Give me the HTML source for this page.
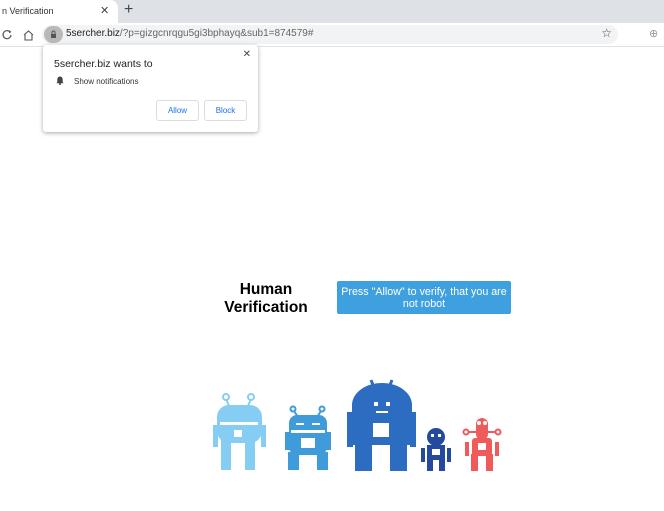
<!DOCTYPE html>
<html><head><meta charset="utf-8"><style>
*{margin:0;padding:0;box-sizing:border-box}
body{width:664px;height:511px;background:#fff;font-family:"Liberation Sans",sans-serif;position:relative;overflow:hidden}
.tabbar{position:absolute;left:0;top:0;width:664px;height:23px;background:#dee1e6}
.tab{position:absolute;left:0;top:0;width:118px;height:23px;background:#fff;border-radius:0 8px 0 0;font-size:9px;color:#333;padding:6px 0 0 2px}
.tab .x{position:absolute;left:100px;top:4px;font-size:11px;color:#444}
.plus{position:absolute;left:124px;top:1px;font-size:16px;color:#444}
.addr{position:absolute;left:0;top:23px;width:664px;height:24px;background:#fff;border-bottom:1px solid #e2e2e2}
.omni{position:absolute;left:42px;top:2px;width:576px;height:19px;background:#f1f3f4;border-radius:10px;font-size:10px;color:#222;padding:3px 0 0 24px}
.omni .lk{position:absolute;left:2px;top:1px;width:19px;height:17px;border-radius:9px;background:#b9b9b9}
.omni span{color:#666}
.pop{position:absolute;left:43px;top:45px;width:215px;height:87px;background:#fff;border-radius:3px;box-shadow:0 1px 4px rgba(0,0,0,.35)}
.btn{position:absolute;top:55px;height:21px;border:1px solid #dadce0;border-radius:3px;font-size:8px;color:#1a73e8;text-align:center;line-height:19px}
h1{position:absolute;left:218px;top:281px;width:96px;text-align:center;font-size:15.5px;line-height:18px;font-weight:bold;color:#000}
.cta{position:absolute;left:337px;top:281px;width:174px;height:33px;background:#3fa0e0;border-radius:2px;color:#fff;font-size:10.7px;text-align:center;line-height:12px;padding-top:5px}
</style></head><body>
<div class="tabbar"><div class="tab">n Verification<span class="x">✕</span></div><div class="plus">+</div></div>
<div class="addr">
<svg style="position:absolute;left:0;top:5px" width="36" height="14"><path d="M10 4a4 4 0 1 0 1 3" fill="none" stroke="#555" stroke-width="1.2"/><path d="M9 2l2.5 2-2.5 1.3z" fill="#555"/><path d="M24 7l4.5-4 4.5 4M25 6v6h7V6" fill="none" stroke="#555" stroke-width="1.1"/></svg>
<div class="omni"><div class="lk"><svg width="19" height="17"><rect x="7" y="8" width="5" height="4" fill="#555"/><path d="M8 8V6.5a1.5 1.5 0 0 1 3 0V8" fill="none" stroke="#555"/></svg></div>5sercher.biz<span>/?p=gizgcnrqgu5gi3bphayq&amp;sub1=874579#</span>
<span style="position:absolute;right:6px;top:1px;color:#444;font-size:12px">☆</span></div>
<span style="position:absolute;left:649px;top:4px;color:#999;font-size:11px">⊕</span>
</div>
<div class="pop">
<div style="position:absolute;right:7px;top:4px;font-size:10px;color:#444">✕</div>
<div style="position:absolute;left:11px;top:13px;font-size:10.5px;color:#222">5sercher.biz wants to</div>
<svg style="position:absolute;left:13px;top:31px" width="8" height="9"><path d="M4 0.5c-2 0-2.7 1.6-2.7 3.3V6L0.5 7.2h7L6.7 6V3.8C6.7 2.1 6 0.5 4 0.5z" fill="#444"/><circle cx="4" cy="8" r="1" fill="#444"/></svg>
<div style="position:absolute;left:31px;top:32px;font-size:8px;color:#333">Show notifications</div>
<div class="btn" style="left:113px;width:43px">Allow</div>
<div class="btn" style="left:161px;width:43px">Block</div>
</div>
<h1>Human Verification</h1>
<div class="cta">Press "Allow" to verify, that you are not robot</div>
<svg style="position:absolute;left:0;top:0" width="664" height="511">
<g fill="#86cdf3" stroke="#86cdf3">
<line x1="230" y1="408" x2="226" y2="399" stroke-width="2"/><line x1="247" y1="408" x2="251" y2="399" stroke-width="2"/>
<circle cx="226" cy="397" r="3" fill="#fff" stroke-width="2"/><circle cx="251" cy="397" r="3" fill="#fff" stroke-width="2"/>
<rect x="217" y="405" width="45" height="38" rx="12" stroke="none"/>
<rect x="221" y="440" width="10" height="30" stroke="none"/><rect x="245" y="440" width="10" height="30" stroke="none"/>
<rect x="213" y="425" width="5" height="22" stroke="none"/><rect x="261" y="425" width="5" height="22" stroke="none"/>
</g>
<g fill="#3f9bd9" stroke="#3f9bd9">
<line x1="298" y1="417" x2="294" y2="411" stroke-width="2"/><line x1="317" y1="417" x2="321" y2="411" stroke-width="2"/>
<circle cx="293" cy="409" r="2.5" fill="#fff" stroke-width="2"/><circle cx="322" cy="409" r="2.5" fill="#fff" stroke-width="2"/>
<rect x="289" y="415" width="38" height="40" rx="8" stroke="none"/>
<rect x="288" y="452" width="11" height="18" stroke="none"/><rect x="317" y="452" width="11" height="18" stroke="none"/>
<rect x="285" y="432" width="5" height="18" stroke="none"/><rect x="326" y="432" width="5" height="18" stroke="none"/>
</g>
<g fill="#2c6dc1" stroke="#2c6dc1">
<line x1="375" y1="390" x2="371" y2="380" stroke-width="3"/><line x1="388" y1="390" x2="392" y2="380" stroke-width="3"/>
<path d="M352 445V405a30 22 0 0 1 60 0V445z" stroke="none"/>
<rect x="355" y="440" width="17" height="31" stroke="none"/><rect x="390" y="440" width="17" height="31" stroke="none"/>
<rect x="347" y="412" width="6" height="35" stroke="none"/><rect x="410" y="412" width="6" height="35" stroke="none"/>
</g>
<g fill="#24499d" stroke="#24499d">
<circle cx="436" cy="437" r="9" stroke="none"/>
<rect x="427" y="445" width="18" height="15" stroke="none"/>
<rect x="427" y="458" width="6" height="13" stroke="none"/><rect x="439" y="458" width="6" height="13" stroke="none"/>
<rect x="421" y="448" width="4" height="14" stroke="none"/><rect x="447" y="448" width="4" height="14" stroke="none"/>
</g>
<g fill="#ef5b5b" stroke="#ef5b5b">
<rect x="476" y="418" width="12" height="22" rx="6" stroke="none"/>
<line x1="466" y1="432" x2="498" y2="432" stroke-width="2"/>
<circle cx="466" cy="432" r="2.5" fill="#fff" stroke-width="2"/><circle cx="498" cy="432" r="2.5" fill="#fff" stroke-width="2"/>
<rect x="472" y="438" width="20" height="18" rx="3" stroke="none"/>
<rect x="471" y="454" width="7" height="17" stroke="none"/><rect x="486" y="454" width="7" height="17" stroke="none"/>
<rect x="465" y="442" width="4" height="14" stroke="none"/><rect x="495" y="442" width="4" height="14" stroke="none"/>
</g>
<g fill="#fff">
<rect x="220" y="422" width="38" height="3"/><rect x="291" y="430" width="34" height="3"/>
<rect x="373" y="423" width="16" height="14"/><rect x="374" y="402" width="4" height="4"/><rect x="386" y="402" width="4" height="4"/><rect x="376" y="411" width="12" height="2"/>
<rect x="301" y="438" width="14" height="10"/><rect x="296" y="423" width="8" height="2"/><rect x="312" y="423" width="8" height="2"/>
<rect x="234" y="430" width="8" height="7"/><rect x="432" y="449" width="8" height="6"/><rect x="431" y="434" width="3" height="3"/><rect x="438" y="434" width="3" height="3"/>
<rect x="478" y="443" width="8" height="7"/><circle cx="479" cy="423" r="2"/><circle cx="485" cy="423" r="2"/>
</g>
</svg>
</body></html>
